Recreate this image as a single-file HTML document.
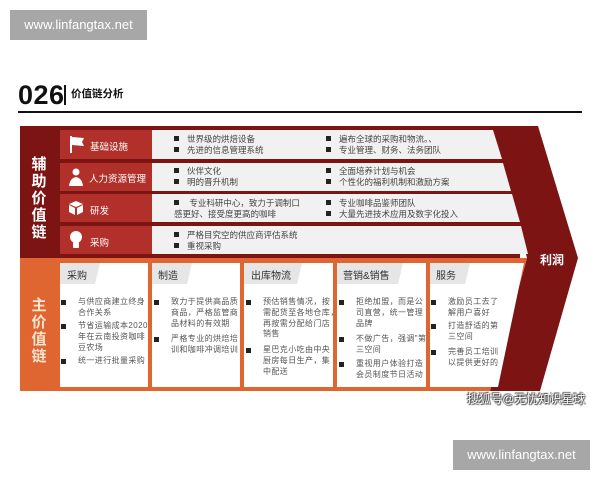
<!DOCTYPE html>
<html><head><meta charset="utf-8"><style>
*{margin:0;padding:0;box-sizing:border-box}
body{width:600px;height:480px;background:#fff;position:relative;overflow:hidden;font-family:"Liberation Sans","Noto Sans CJK SC",sans-serif;color:#333}
.a{position:absolute;white-space:nowrap}
.t{font-size:8.5px;line-height:10.5px;color:#444}
.b{display:inline-block;width:5px;height:5px;background:#222;margin-right:8px;vertical-align:1px}
.lbl{color:#fff;font-size:9.5px}
.side{position:absolute;color:#fff;font-size:15px;line-height:17px;width:18px;text-align:center;font-weight:bold}
.li{position:absolute;font-size:8px;line-height:10.8px;color:#555;letter-spacing:0.4px;white-space:nowrap}
.li:before{content:"";position:absolute;left:-17px;top:3px;width:5px;height:5px;background:#222}
.tab{position:absolute;font-size:10px;color:#333}
</style></head><body>
<div class="a" style="left:10px;top:10px;width:137px;height:30px;background:#a7a7a7;color:#fff;font-size:13px;line-height:30px;text-align:center">www.linfangtax.net</div>
<div class="a" style="left:18px;top:80px;font-size:27px;font-weight:bold;color:#111;letter-spacing:0.5px">026</div>
<div class="a" style="left:64px;top:85px;width:2px;height:20px;background:#111"></div>
<div class="a" style="left:71px;top:86px;font-size:10.5px;font-weight:bold;color:#111">价值链分析</div>
<div class="a" style="left:18px;top:111px;width:564px;height:2px;background:#111"></div>

<svg class="a" style="left:0;top:0" width="600" height="480">
<polygon points="20,126 538,126 578,258 540,391 490,391 527,258 492,126" fill="#7c1414"/>
<rect x="20" y="126" width="500" height="132" fill="#7c1414"/>
<polygon points="20,258 527,258 490,391 20,391" fill="#df6630"/>
<polygon points="60,130 493,130 502,159 60,159" fill="#f1f1f1"/>
<polygon points="60,163 503,163 511,191 60,191" fill="#f1f1f1"/>
<polygon points="60,194 512,194 520,222 60,222" fill="#f1f1f1"/>
<polygon points="60,226 521,226 528,254 60,254" fill="#f1f1f1"/>
<rect x="60" y="130" width="92" height="29" fill="#b1312a"/>
<rect x="60" y="163" width="92" height="28" fill="#b1312a"/>
<rect x="60" y="194" width="92" height="28" fill="#b1312a"/>
<rect x="60" y="226" width="92" height="28" fill="#b1312a"/>
<rect x="60" y="263" width="88" height="124" fill="#fff"/>
<rect x="152" y="263" width="88" height="124" fill="#fff"/>
<rect x="244" y="263" width="89" height="124" fill="#fff"/>
<rect x="337" y="263" width="89" height="124" fill="#fff"/>
<polygon points="430,263 524,263 498,387 430,387" fill="#fff"/>
<polygon points="60,263 100,263 95,284 60,284" fill="#e6e6e6"/>
<polygon points="152,263 192,263 187,284 152,284" fill="#e6e6e6"/>
<polygon points="244,263 302,263 297,284 244,284" fill="#e6e6e6"/>
<polygon points="337,263 403,263 398,284 337,284" fill="#e6e6e6"/>
<polygon points="430,263 470,263 465,284 430,284" fill="#e6e6e6"/>
<g fill="#fff">
<rect x="70" y="136" width="2" height="17"/><polygon points="72,137 84,138 82,142 84,146 72,145"/>
<circle cx="76" cy="172" r="3.5"/><path d="M69,186 Q70,178 76,177 Q82,178 83,186Z"/>
<polygon points="76,201 83,204 76,207 69,204"/><polygon points="69,205 75,208 75,215 69,212"/><polygon points="77,208 83,205 83,212 77,215"/>
<circle cx="76" cy="237" r="6"/><rect x="73" y="242" width="6" height="6" rx="1"/>
</g>
</svg>

<div class="side" style="left:30px;top:156px">辅<br>助<br>价<br>值<br>链</div>
<div class="side" style="left:30px;top:297px;color:#fbe4d4">主<br>价<br>值<br>链</div>
<div class="a lbl" style="left:90px;top:139px">基础设施</div>
<div class="a lbl" style="left:89px;top:171px">人力资源管理</div>
<div class="a lbl" style="left:90px;top:203px">研发</div>
<div class="a lbl" style="left:90px;top:235px">采购</div>

<div class="a t" style="left:174px;top:134px"><span class="b"></span>世界级的烘焙设备<br><span class="b"></span>先进的信息管理系统</div>
<div class="a t" style="left:174px;top:166px"><span class="b"></span>伙伴文化<br><span class="b"></span>明的晋升机制</div>
<div class="a t" style="left:174px;top:198px"><span class="b"></span>&nbsp;专业科研中心，致力于调制口<br>感更好、接受度更高的咖啡</div>
<div class="a t" style="left:174px;top:230px"><span class="b"></span>严格目究空的供应商评估系统<br><span class="b"></span>重视采购</div>
<div class="a t" style="left:326px;top:134px"><span class="b"></span>遍布全球的采购和物流。、<br><span class="b"></span>专业管理、财务、法务团队</div>
<div class="a t" style="left:326px;top:166px"><span class="b"></span>全面培养计划与机会<br><span class="b"></span>个性化的福利机制和激励方案</div>
<div class="a t" style="left:326px;top:198px"><span class="b"></span>专业咖啡品鉴师团队<br><span class="b"></span>大量先进技术应用及数字化投入</div>
<div class="a" style="left:540px;top:251px;color:#fff;font-weight:bold;font-size:12px">利润</div>

<div class="tab" style="left:67px;top:267px">采购</div>
<div class="tab" style="left:158px;top:267px">制造</div>
<div class="tab" style="left:251px;top:267px">出库物流</div>
<div class="tab" style="left:343px;top:267px">营销&amp;销售</div>
<div class="tab" style="left:436px;top:267px">服务</div>

<div class="li" style="left:78px;top:297px">与供应商建立终身<br>合作关系</div>
<div class="li" style="left:78px;top:321px">节省运输成本2020<br>年在云南投资咖啡<br>豆农场</div>
<div class="li" style="left:78px;top:356px">统一进行批量采购</div>
<div class="li" style="left:171px;top:297px">致力于提供高品质<br>商品，严格监管商<br>品材料的有效期</div>
<div class="li" style="left:171px;top:334px">严格专业的烘焙培<br>训和咖啡冲调培训</div>
<div class="li" style="left:263px;top:297px">预估销售情况，按<br>需配货至各地仓库，<br>再按需分配给门店<br>销售</div>
<div class="li" style="left:263px;top:345px">星巴克小吃由中央<br>厨房每日生产，集<br>中配送</div>
<div class="li" style="left:356px;top:297px">拒绝加盟，而是公<br>司直营，统一管理<br>品牌</div>
<div class="li" style="left:356px;top:334px">不做广告，强调"第<br>三空间</div>
<div class="li" style="left:356px;top:359px">重视用户体验打造<br>会员制度节日活动</div>
<div class="li" style="left:448px;top:297px">激励员工去了<br>解用户喜好</div>
<div class="li" style="left:448px;top:321px">打造舒适的第<br>三空间</div>
<div class="li" style="left:448px;top:347px">完善员工培训<br>以提供更好的</div>

<div class="a" style="left:467px;top:390px;font-size:11.8px;color:#fff;text-shadow:0 0 1px #333,1px 1px 1px #333,-1px -1px 1px #333">搜狐号@无忧知识星球</div>
<div class="a" style="left:453px;top:440px;width:137px;height:30px;background:#a7a7a7;color:#fff;font-size:13px;line-height:30px;text-align:center">www.linfangtax.net</div>
</body></html>
